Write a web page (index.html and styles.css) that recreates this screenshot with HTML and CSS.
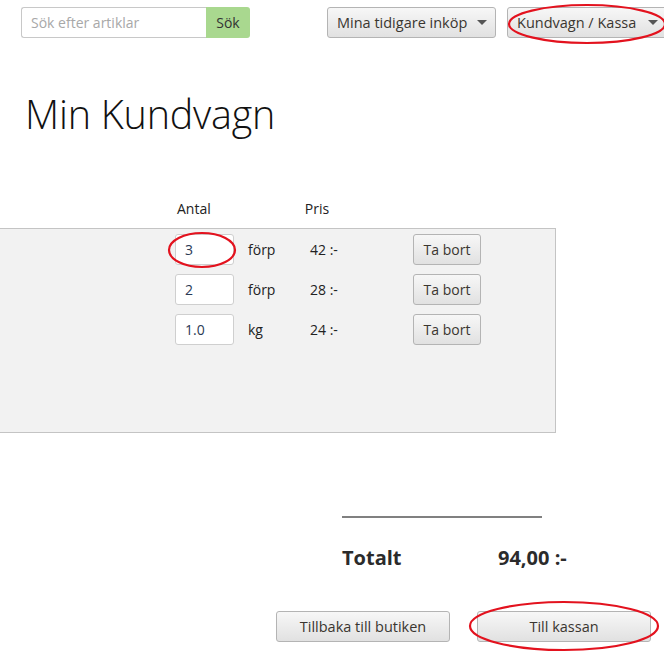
FILE: index.html
```html
<!DOCTYPE html>
<html lang="sv">
<head>
<meta charset="utf-8">
<title>Min Kundvagn</title>
<link rel="stylesheet" href="styles.css">
</head>
<body>
<header class="topbar">
  <form class="search">
    <input class="search-input" type="text" placeholder="Sök efter artiklar">
    <button class="search-btn" type="button">Sök</button>
  </form>
  <nav class="nav">
    <button class="btn nav-btn nav-history" type="button">Mina tidigare inköp <span class="caret"></span></button>
    <div class="marked">
      <button class="btn nav-btn nav-cart" type="button">Kundvagn / Kassa <span class="caret"></span></button>
      <svg class="ring ring-nav" viewBox="0 0 160 42"><ellipse cx="80" cy="21" rx="78" ry="19"/></svg>
    </div>
  </nav>
</header>

<h1 class="title">Min Kundvagn</h1>

<div class="cart">
  <div class="cart-head">
    <span class="col-qty">Antal</span>
    <span class="col-price">Pris</span>
  </div>
  <div class="cart-panel">
    <div class="row">
      <div class="marked">
        <input class="qty" type="text" value="3">
        <svg class="ring ring-qty" viewBox="0 0 70 38"><ellipse cx="35" cy="19" rx="33" ry="17"/></svg>
      </div>
      <span class="unit">förp</span>
      <span class="price">42 :-</span>
      <button class="btn remove" type="button">Ta bort</button>
    </div>
    <div class="row">
      <input class="qty" type="text" value="2">
      <span class="unit">förp</span>
      <span class="price">28 :-</span>
      <button class="btn remove" type="button">Ta bort</button>
    </div>
    <div class="row">
      <input class="qty" type="text" value="1.0">
      <span class="unit">kg</span>
      <span class="price">24 :-</span>
      <button class="btn remove" type="button">Ta bort</button>
    </div>
  </div>
</div>

<section class="summary">
  <hr class="sum-line">
  <div class="total">
    <span class="total-label">Totalt</span>
    <span class="total-value">94,00 :-</span>
  </div>
</section>

<div class="actions">
  <button class="btn action" type="button">Tillbaka till butiken</button>
  <div class="marked">
    <button class="btn action" type="button">Till kassan</button>
    <svg class="ring ring-checkout" viewBox="0 0 192 52"><ellipse cx="96" cy="26" rx="94" ry="24"/></svg>
  </div>
</div>
</body>
</html>
```

FILE: styles.css
```css
html, body {
  margin: 0;
  padding: 0;
  overflow: hidden;
  background: #fff;
}

body {
  font-family: "Open Sans", "Noto Sans", "DejaVu Sans", sans-serif;
  color: #222;
  width: 664px;
  height: 655px;
}

button, input {
  font-family: inherit;
}

.topbar {
  display: flex;
  align-items: flex-start;
  padding: 7px 0 0 21px;
  height: 31px;
}

.search {
  display: flex;
  margin: 0;
}

.search-input {
  box-sizing: border-box;
  width: 185px;
  height: 31px;
  border: 1px solid #c8c8c8;
  border-right: none;
  border-radius: 3px 0 0 3px;
  padding: 0 9px;
  font-size: 14px;
  color: #555;
  outline: none;
}

.search-input::placeholder {
  color: #a8a8a8;
}

.search-btn {
  box-sizing: border-box;
  width: 44px;
  height: 31px;
  border: none;
  border-radius: 0 3px 3px 0;
  background: #a9d88f;
  color: #333;
  font-size: 14px;
  padding: 0;
}

.nav {
  display: flex;
  gap: 11px;
  margin-left: 77px;
}

.btn {
  box-sizing: border-box;
  border: 1px solid #b4b4b4;
  border-radius: 3px;
  background: linear-gradient(#f7f7f7, #e1e1e1);
  color: #3a3630;
  font-size: 14px;
  padding: 0;
  cursor: pointer;
}

.nav-btn {
  height: 31px;
  display: flex;
  align-items: center;
  justify-content: space-between;
  padding: 0 8px 0 9px;
  font-size: 14.5px;
}

.nav-history {
  width: 169px;
}

.nav-cart {
  width: 160px;
}

.caret {
  width: 0;
  height: 0;
  border-left: 5px solid transparent;
  border-right: 5px solid transparent;
  border-top: 5px solid #555;
  margin-left: 8px;
}

.marked {
  position: relative;
  display: flex;
}

.ring {
  position: absolute;
  pointer-events: none;
  fill: none;
  stroke: #e3121e;
  stroke-width: 2.2;
}

.ring-nav {
  left: 0;
  top: -4px;
  width: 160px;
  height: 42px;
}

.ring-qty {
  left: -8px;
  top: -3px;
  width: 70px;
  height: 38px;
}

.ring-checkout {
  left: -9px;
  top: -11px;
  width: 192px;
  height: 52px;
}

.title {
  margin: 50px 0 0 25px;
  font-size: 39.5px;
  font-weight: 300;
  line-height: 52px;
  color: #111;
  letter-spacing: -0.2px;
}

.cart {
  margin-top: 59px;
}

.cart-head {
  display: flex;
  height: 29px;
  font-size: 14px;
  color: #222;
  line-height: 20px;
}

.col-qty {
  margin-left: 177px;
}

.col-price {
  margin-left: 94px;
}

.cart-panel {
  box-sizing: border-box;
  width: 557px;
  height: 205px;
  margin-left: -1px;
  background: #f2f2f2;
  border: 1px solid #c4c4c4;
  padding-top: 5px;
  display: flex;
  flex-direction: column;
  gap: 9px;
}

.row {
  display: flex;
  align-items: center;
  height: 31px;
  padding-left: 175px;
  font-size: 14px;
  color: #222;
}

.qty {
  box-sizing: border-box;
  width: 59px;
  height: 31px;
  border: 1px solid #cfcfcf;
  border-radius: 3px;
  background: #fff;
  padding: 0 9px;
  font-size: 14px;
  color: #2a3a55;
  outline: none;
}

.unit {
  margin-left: 14px;
  width: 62px;
}

.price {
  width: 103px;
}

.remove {
  width: 68px;
  height: 31px;
}

.summary {
  margin: 83px 0 0 342px;
  width: 200px;
}

.sum-line {
  margin: 0;
  border: none;
  height: 2px;
  background: #808080;
}

.total {
  display: flex;
  margin-top: 26px;
  font-size: 20px;
  font-weight: 700;
  color: #2b2b2b;
  line-height: 28px;
}

.total-value {
  margin-left: 156px;
  white-space: nowrap;
}

.total-label {
  width: 0;
  white-space: nowrap;
}

.actions {
  display: flex;
  gap: 27px;
  margin: 39px 0 0 276px;
}

.action {
  width: 174px;
  height: 31px;
  font-size: 14.5px;
}
```
